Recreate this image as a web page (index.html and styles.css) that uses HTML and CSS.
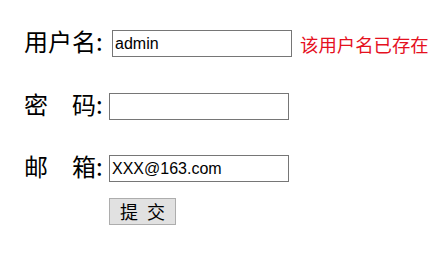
FILE: index.html
```html
<!DOCTYPE html>
<html lang="zh-CN">
<head>
<meta charset="utf-8">
<title>注册</title>
<link rel="stylesheet" href="styles.css">
</head>
<body>
<form class="reg-form">
  <div class="row row-user">
    <label class="label">用户名:</label>
    <input class="field field-user" type="text" value="admin">
    <span class="error">该用户名已存在</span>
  </div>
  <div class="row row-pass">
    <label class="label">密　码:</label>
    <input class="field" type="password" value="">
  </div>
  <div class="row row-mail">
    <label class="label">邮　箱:</label>
    <input class="field" type="text" value="XXX@163.com">
  </div>
  <div class="row row-submit">
    <button class="submit" type="button">提 交</button>
  </div>
</form>
</body>
</html>
```

FILE: styles.css
```css
html, body {
  margin: 0;
  padding: 0;
  background: #ffffff;
}

.reg-form {
  display: flex;
  flex-direction: column;
  padding: 30px 0 0 24px;
  font-family: "Noto Sans CJK SC", "Noto Sans", sans-serif;
  color: #000;
}

.row {
  display: flex;
  align-items: center;
  height: 27px;
}

.row-pass {
  margin-top: 36px;
}

.row-mail {
  margin-top: 35px;
}

.row-submit {
  margin-top: 16px;
  padding-left: 85px;
}

.label {
  align-self: flex-start;
  margin-top: -3px;
  font-size: 24px;
  line-height: 27px;
  width: 85px;
  white-space: nowrap;
}

.row-user .label {
  width: 88px;
}

.field {
  box-sizing: border-box;
  width: 180px;
  height: 27px;
  margin: 0;
  padding: 0 2px;
  border: 1px solid #767676;
  border-radius: 0;
  font-family: "Liberation Sans", Arial, sans-serif;
  font-size: 16px;
  color: #000;
  background: #fff;
  outline: none;
}

.error {
  margin-left: 8px;
  font-size: 18.4px;
  color: #e5101e;
  white-space: nowrap;
}

.submit {
  box-sizing: border-box;
  width: 67px;
  height: 27px;
  margin: 0;
  padding: 0;
  border: 1px solid #adadad;
  border-radius: 0;
  background: #e1e1e1;
  font-family: "Noto Sans CJK SC", sans-serif;
  font-size: 18px;
  line-height: 25px;
  word-spacing: 5px;
  color: #000;
}
```
